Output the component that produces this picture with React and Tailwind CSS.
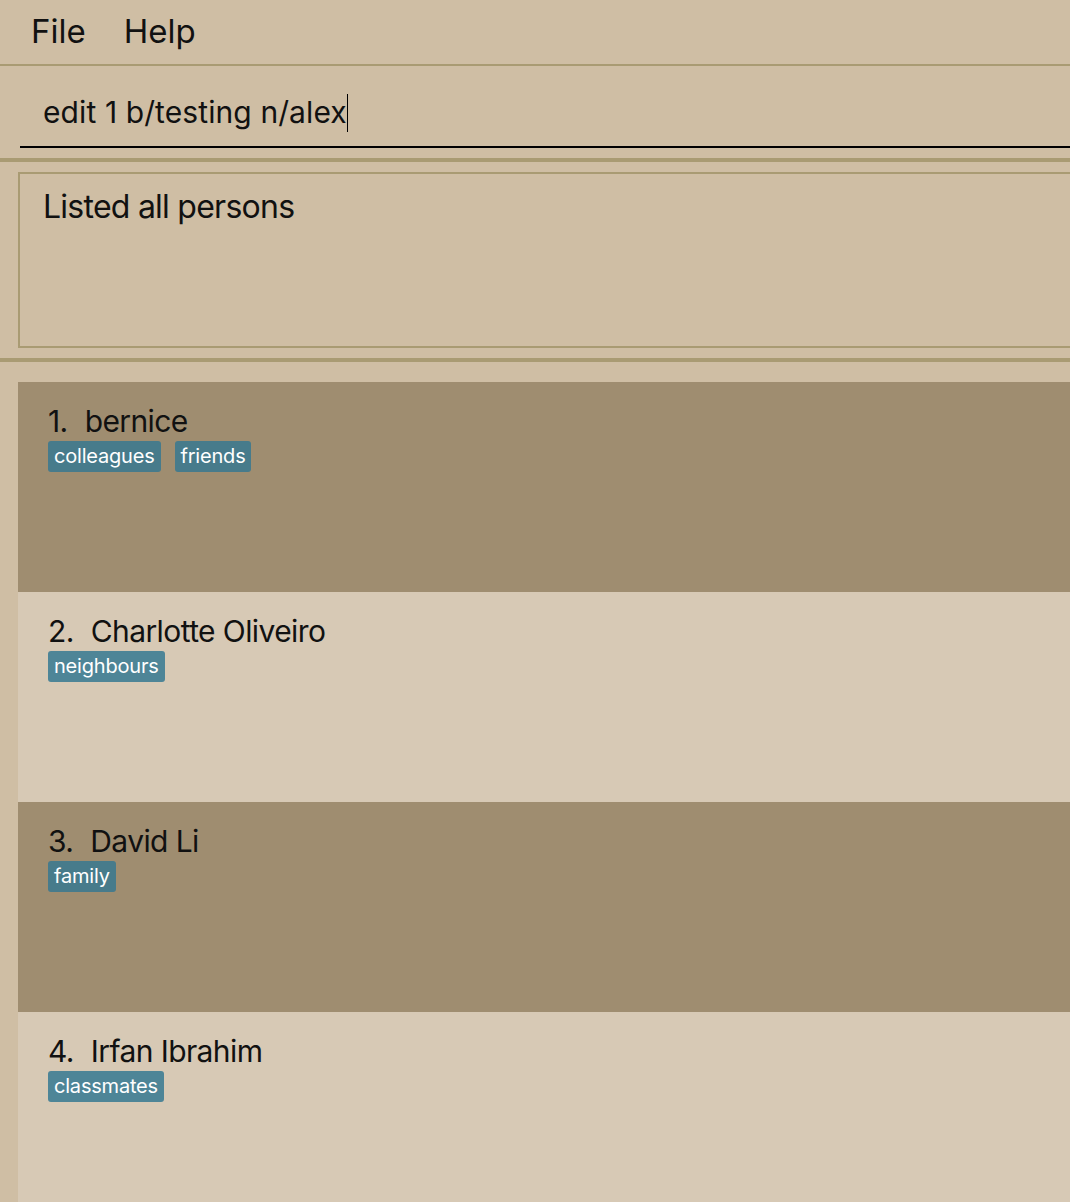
import React from "react";

const persons = [
  { n: 1, name: "bernice", tags: ["colleagues", "friends"] },
  { n: 2, name: "Charlotte Oliveiro", tags: ["neighbours"] },
  { n: 3, name: "David Li", tags: ["family"] },
  { n: 4, name: "Irfan Ibrahim", tags: ["classmates"] },
];

export default function App() {
  return (
    <div
      className="w-[1070px] h-[1202px] overflow-hidden bg-[#cfbea4] text-[#111]"
      style={{ fontFamily: "Inter, 'Noto Sans', sans-serif" }}
    >
      {/* menu */}
      <div className="h-[64px] flex items-center pl-[31px] gap-[38px] text-[33px] leading-none pb-[1px]">
        <span>File</span>
        <span>Help</span>
      </div>
      <div className="h-[2px] bg-[#a99b73]" />
      {/* command box */}
      <div className="pt-[12px] pl-[20px]">
        <div className="h-[70px] border-b-2 border-black flex items-center pl-[23px] text-[30px] tracking-[0.1px] pt-[1px]">
          <span>edit 1 b/testing n/alex</span>
          <span className="w-[1.5px] h-[38px] bg-black" />
        </div>
      </div>
      <div className="h-[10px]" />
      <div className="h-[4px] bg-[#a99b73]" />
      {/* result */}
      <div className="pt-[10px] pl-[18px]">
        <div className="h-[176px] border-2 border-r-0 border-[#a99b73] pl-[23px] pt-[9px] text-[32px] tracking-[-0.75px]">
          Listed all persons
        </div>
      </div>
      <div className="h-[10px]" />
      <div className="h-[4px] bg-[#a99b73]" />
      {/* list */}
      <div className="pt-[20px] pl-[18px]">
        {persons.map((p) => {
          const dark = p.n % 2 === 1;
          return (
            <div
              key={p.n}
              className={`h-[210px] pl-[30px] pt-[20px] ${dark ? "bg-[#9f8d70]" : "bg-[#d7c9b5]"}`}
            >
              <div className="flex text-[30px] leading-[38px] tracking-[-0.6px]">
                <span>{p.n}.</span>
                <span className="ml-[17px]">{p.name}</span>
              </div>
              <div className="flex gap-[14px] mt-[1px]">
                {p.tags.map((t) => (
                  <span
                    key={t}
                    className={`h-[31px] px-[6px] rounded-[3px] text-white text-[20px] leading-[30px] tracking-[-0.2px] ${dark ? "bg-[#477b8b]" : "bg-[#4e8597]"}`}
                  >
                    {t}
                  </span>
                ))}
              </div>
            </div>
          );
        })}
      </div>
    </div>
  );
}
